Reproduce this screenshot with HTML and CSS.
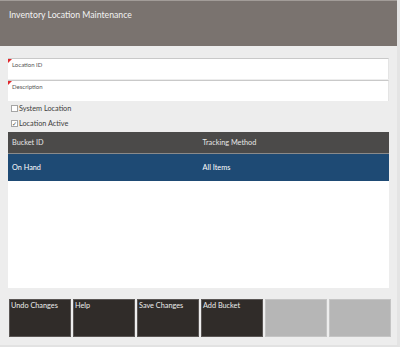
FILE: index.html
```html
<!DOCTYPE html>
<html lang="en">
<head>
    <meta charset="UTF-8">
    <meta name="viewport" content="width=device-width, initial-scale=1.0">
    <title>Inventory Location Maintenance</title>
    <link rel="stylesheet" href="styles.css">
</head>
<body>
    <div class="app">
        <div class="header">Inventory Location Maintenance</div>

        <div class="content">
            <div class="field required">
                <span class="field-label">Location ID</span>
            </div>
            <div class="field required">
                <span class="field-label">Description</span>
            </div>

            <label class="check-row">
                <span class="check-box"></span>
                System Location
            </label>
            <label class="check-row">
                <span class="check-box checked">&#10003;</span>
                Location Active
            </label>

            <div class="grid">
                <div class="grid-head">
                    <div class="cell">Bucket ID</div>
                    <div class="cell">Tracking Method</div>
                </div>
                <div class="grid-row selected">
                    <div class="cell">On Hand</div>
                    <div class="cell">All Items</div>
                </div>
            </div>

            <div class="button-bar">
                <button class="button">Undo Changes</button>
                <button class="button">Help</button>
                <button class="button">Save Changes</button>
                <button class="button">Add Bucket</button>
                <button class="button disabled"></button>
                <button class="button disabled"></button>
            </div>
        </div>
    </div>
</body>
</html>
```

FILE: styles.css
```css
body {
    margin: 0;
    padding: 0;
    font-family: Lato, "Open Sans", sans-serif;
    background: #ededed;
}

.app {
    width: 400px;
    height: 347px;
    box-sizing: border-box;
    border-right: 3px solid #e4e4e4;
    border-bottom: 2px solid #e2e2e2;
    background: #ededed;
    overflow: hidden;
}

.header {
    height: 46px;
    box-sizing: border-box;
    background: #7a736f;
    border-top: 1px solid #a29c98;
    color: #f2f2f2;
    font-size: 8.7px;
    padding: 8px 9px;
}

.content {
    padding: 12px 8px 0 8px;
}

.field {
    position: relative;
    height: 21px;
    box-sizing: border-box;
    width: 381px;
    background: #fff;
    border-top: 1px solid #c9c9c9;
    border-right: 1px solid #e4e4e4;
    margin-bottom: 1px;
}

.field.required::before {
    content: "";
    position: absolute;
    left: 0;
    top: 0;
    border-top: 4px solid #e0262b;
    border-right: 4px solid transparent;
}

.field-label {
    display: block;
    font-size: 6px;
    color: #555;
    padding: 2px 0 0 4px;
}

.check-row {
    display: flex;
    align-items: center;
    height: 15px;
    font-size: 7.3px;
    color: #3d3d3d;
    padding-left: 3px;
    margin-top: -1px;
}

.check-row + .check-row {
    margin-top: 0;
    margin-bottom: 1px;
}

.check-box {
    width: 5px;
    height: 5px;
    border: 1px solid #a5a5a5;
    background: #fff;
    margin-right: 1px;
    font-size: 6px;
    line-height: 5px;
    text-align: center;
    color: #444;
}

.grid {
    width: 381px;
    height: 156px;
    background: #fff;
}

.grid-head,
.grid-row {
    display: flex;
    align-items: center;
}

.grid-head {
    height: 21px;
    background: #4b4a49;
    border-bottom: 1px solid #8a8a8a;
    color: #e6e6e6;
    font-size: 7.3px;
}

.grid-row {
    height: 27px;
    font-size: 7.3px;
    color: #fff;
}

.grid-row.selected {
    background: #1e4a74;
}

.cell {
    flex: 1;
    padding-left: 4px;
}

.button-bar {
    display: grid;
    grid-template-columns: repeat(6, 62px);
    gap: 2px;
    margin-top: 11px;
    padding-left: 1px;
}

.button {
    height: 38px;
    background: #302c29;
    border: 1px solid #5a5654;
    color: #ececec;
    font-family: Lato, "Open Sans", sans-serif;
    font-size: 7.3px;
    text-align: left;
    padding: 1px 1px;
    display: flex;
    align-items: flex-start;
}

.button.disabled {
    background: #b6b6b6;
    border-color: #c4c4c4;
}
```
